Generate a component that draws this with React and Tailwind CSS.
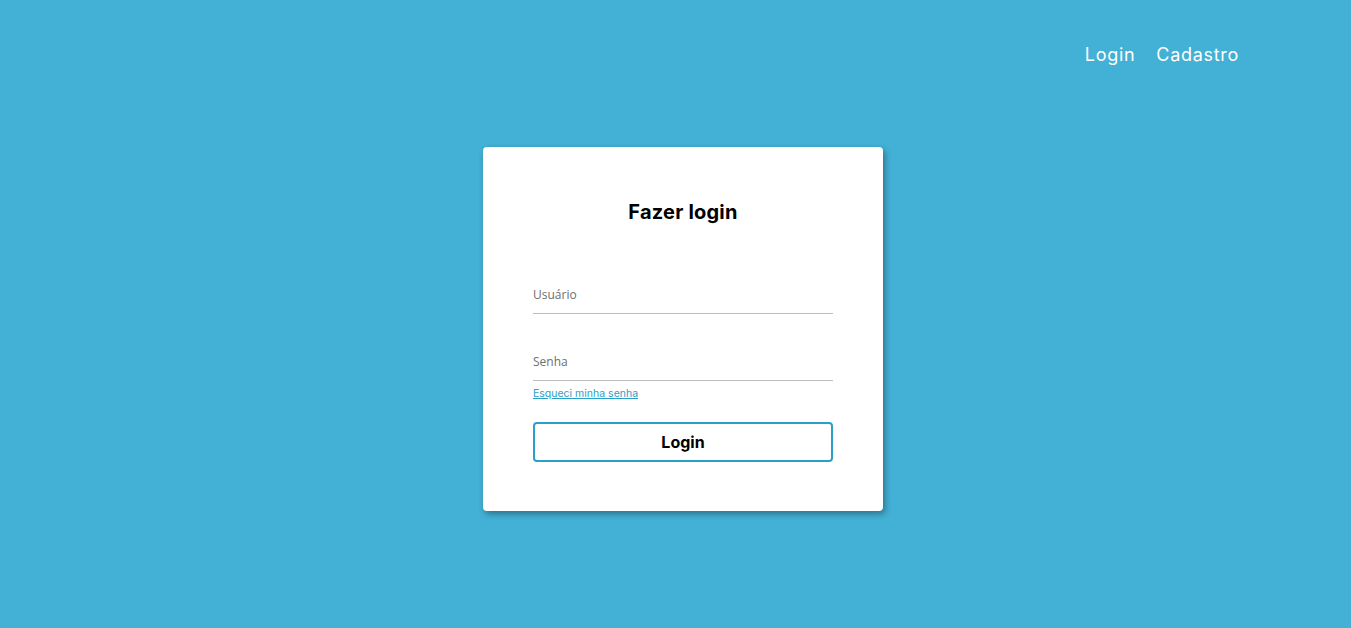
import React, { useState } from 'react';

const App = () => {
  const [user, setUser] = useState('');
  const [pass, setPass] = useState('');

  return (
    <div className="min-h-screen w-full bg-[#43b0d5] font-['Inter',sans-serif]">
      <header className="flex justify-end items-center h-[108px] pr-[112px]">
        <nav className="flex gap-[21px] text-white text-[18px] tracking-[0.7px]">
          <a href="#" className="hover:underline">Login</a>
          <a href="#" className="hover:underline">Cadastro</a>
        </nav>
      </header>

      <main className="flex justify-center pt-[39px] pl-[15px]">
        <div className="w-[400px] h-[364px] bg-white rounded-[4px] shadow-[2px_3px_6px_rgba(0,0,0,0.35)] px-[50px] pt-[53px]">
          <h1 className="text-center text-[20px] font-bold text-black leading-[24px] tracking-[0.2px]">Fazer login</h1>

          <input
            value={user}
            onChange={(e) => setUser(e.target.value)}
            placeholder="Usuário"
            className="block mt-[62px] w-full h-[28px] pb-[10px] border-b border-[#bdbdbd] text-[12px] text-[#555] placeholder-[#6e6e6e] outline-none font-['Open_Sans',sans-serif]"
          />

          <input
            type="password"
            value={pass}
            onChange={(e) => setPass(e.target.value)}
            placeholder="Senha"
            className="block mt-[39px] w-full h-[28px] pb-[10px] border-b border-[#bdbdbd] text-[12px] text-[#555] placeholder-[#6e6e6e] outline-none font-['Open_Sans',sans-serif]"
          />

          <a href="#" className="block mt-[7px] text-[10.5px] leading-[12px] text-[#2a9fc8] underline">
            Esqueci minha senha
          </a>

          <button
            type="button"
            className="block mt-[22px] w-full h-[40px] border-2 border-[#2aa0c8] rounded-[4px] text-[16px] font-bold text-black"
          >
            Login
          </button>
        </div>
      </main>
    </div>
  );
};

export default App;
